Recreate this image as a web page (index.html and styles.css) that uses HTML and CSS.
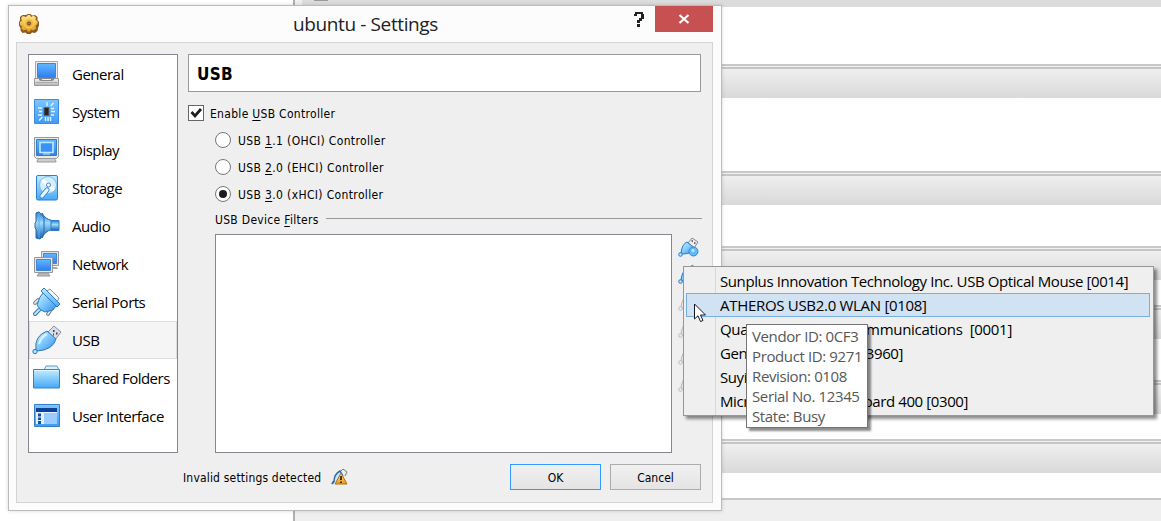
FILE: index.html
```
<!DOCTYPE html>
<html lang="en">
<head>
<meta charset="utf-8">
<title>ubuntu - Settings</title>
<link rel="stylesheet" href="styles.css">
</head>
<body>
<svg class="defs" width="0" height="0" aria-hidden="true">
  <defs>
    <linearGradient id="blue" x1="0" y1="0" x2="0" y2="1"><stop offset="0" stop-color="#62b8ff"/><stop offset="1" stop-color="#2f7df0"/></linearGradient>
    <linearGradient id="panel" x1="0" y1="0" x2="0" y2="1"><stop offset="0" stop-color="#7cc6ff"/><stop offset="1" stop-color="#3f9bf8"/></linearGradient>
    <linearGradient id="sky" x1="0" y1="0" x2="1" y2="1"><stop offset="0" stop-color="#d4f1ff"/><stop offset=".5" stop-color="#79c6fc"/><stop offset="1" stop-color="#3a8ae8"/></linearGradient>
    <linearGradient id="soft" x1="0" y1="0" x2="0" y2="1"><stop offset="0" stop-color="#c2edff"/><stop offset="1" stop-color="#45a8fa"/></linearGradient>
    <linearGradient id="metal" x1="0" y1="0" x2="0" y2="1"><stop offset="0" stop-color="#f4f4f4"/><stop offset="1" stop-color="#b5b5b5"/></linearGradient>
    <linearGradient id="cone" x1="0" y1="0" x2="0" y2="1"><stop offset="0" stop-color="#2f7acb"/><stop offset=".4" stop-color="#9bdcff"/><stop offset="1" stop-color="#175baf"/></linearGradient>
    <linearGradient id="gold" x1="0" y1="0" x2="0" y2="1"><stop offset="0" stop-color="#ffe88a"/><stop offset="1" stop-color="#e39a17"/></linearGradient>
    <symbol id="plug" viewBox="0 0 22 22">
      <path d="M10 7 14 2l6 4-4 6z" fill="#eee" stroke="#888"/>
      <path d="M13.500 5h1.500M16 7h1.500" stroke="#444" stroke-width="1.500"/>
      <path d="M3 17Q4 8 9 6l9 7Q13 18 4 18z" fill="url(#sky)" stroke="#2878c4"/>
      <circle cx="2.500" cy="18.500" r="1.800" fill="#b5e2ff" stroke="#2878c4"/>
    </symbol>
    <symbol id="plug-off" viewBox="0 0 22 22">
      <path d="M10 7 14 2l6 4-4 6z" fill="#eee" stroke="#bbb"/>
      <path d="M3 17Q4 8 9 6l9 7Q13 18 4 18z" fill="#e3e3e3" stroke="#bbb"/>
      <circle cx="2.500" cy="18.500" r="1.800" fill="#eee" stroke="#bbb"/>
    </symbol>
  </defs>
</svg>

<main class="desktop">
  <div class="manager">
    <div class="manager-list"></div>
    <div class="manager-details">
      <div class="band-tail"><i></i></div>
      <div class="gap g57"></div><div class="band"></div>
      <div class="gap g73"></div><div class="band"></div>
      <div class="gap g41"></div><div class="band"></div>
      <div class="gap g25"></div><div class="band"></div>
      <div class="gap g41"></div><div class="band"></div>
      <div class="gap g25"></div><div class="band"></div>
      <div class="gap g25"></div><div class="details-end"></div>
    </div>
  </div>

  <section class="dialog">
    <header class="titlebar">
      <svg class="gear" width="22" height="22" viewBox="0 0 22 22">
        <path d="M8 2 10 1h2.500L14 2.500l3-.500 2.500 2v3l1.500 2v3.500L20 15l-.5 3-2.500 2-3-.5-1.500 1.500H9L7.500 19.500l-3 .5-2-2.500V15L1 12.500V9.500L2 7V4l2.500-2z" fill="#8a5a22"/>
        <path d="M8.500 3.500 10 2h2l1 2 2.500-1.500 2.500 2-.5 2.500 2 1v3l-2 1.500.5 3-2.500 2-2.500-1-1 2H9.500l-1-2-3 1-2-2 .5-2.500-2-1V9l2-1.500-1-2.500L5 3l3 1z" fill="url(#gold)"/>
        <circle cx="11" cy="10.500" r="4.500" fill="#eeb440" stroke="#f6d269"/>
        <circle cx="11" cy="10.500" r="1.600" fill="#9a7a50" stroke="#6b4720"/>
      </svg>
      <h1 class="title"><span>ubuntu - Settings</span></h1>
      <svg class="help" width="12" height="17" viewBox="0 0 12 17"><path d="M1 5V3h1V1h8v2h1v5H9v2H7v2H4V9h2V7h2V3H4v2zM4 13h3v3H4z" fill="#222"/></svg>
      <button class="close" aria-label="Close"><svg width="12" height="10" viewBox="0 0 12 10"><path d="M1.500 1 10.500 9M10.500 1 1.500 9" stroke="#fff" stroke-width="2.200"/></svg></button>
    </header>

    <div class="client">
      <div class="columns">
        <nav class="nav">
          <a class="nav-item"><svg width="28" height="28" viewBox="0 0 28 28">
            <path d="M2.500 1.500h22v17h-22z" fill="#eee" stroke="#aaa"/><path d="M4.500 3.500h18v14h-18z" fill="url(#blue)" stroke="#3c86d3"/>
            <path d="M1.500 18.500h24v7h-24z" fill="url(#metal)" stroke="#999"/><path d="M6 18h15v2l-2 1H8l-2-1z" fill="#888"/><path d="M9 19h9v1H9z" fill="#eee"/><path d="M3 22.500h21" stroke="#aaa"/>
          </svg><span>General</span></a>
          <a class="nav-item"><svg width="28" height="28" viewBox="0 0 28 28">
            <path d="M1.500 1.500h24v24h-24z" fill="url(#panel)" stroke="#3f8cd8"/><path d="M11 9.500h5v8h-5z" fill="#252525" stroke="#666"/>
            <path d="M14 4v4M17.500 8l3-3M5 10h4M6 13.500h3M5 17h4M18 10.500h3M18 13.500h4M18 17h3M6 22.500 9.500 19M12.500 19v4M15 19v4M17.500 19v4" stroke="#ddf4ff" stroke-width="1.400"/>
          </svg><span>System</span></a>
          <a class="nav-item"><svg width="28" height="28" viewBox="0 0 28 28">
            <path d="M6 22h15l2 3v1H4v-1z" fill="#ccc" stroke="#999"/><path d="M1.500 1.500h24v19l-2 2h-20l-2-2z" fill="#eaeaea" stroke="#999"/><path d="M3.500 3.500h20v16h-20z" fill="url(#blue)" stroke="#347cc5"/><path d="M7 6.500h13v10H7z" fill="#3a90f5" stroke="#bcecff" stroke-width="1.600"/><path d="M10 18h7" stroke="#bcecff"/>
          </svg><span>Display</span></a>
          <a class="nav-item"><svg width="28" height="28" viewBox="0 0 28 28">
            <rect x="3.500" y="1.500" width="21" height="24.500" rx="1.500" fill="url(#soft)" stroke="#2f7fcf"/><circle cx="15" cy="11" r="8.500" fill="#d6effe" stroke="#7ebcec"/><path d="M15 11 9 6M15 11l6 5" stroke="#fff" stroke-width="3"/><circle cx="15.500" cy="11" r="2" fill="#fff" stroke="#3789d4"/><path d="m14 16-5 6" stroke="#3186d6" stroke-width="5" stroke-linecap="round"/><path d="m14 16-5 6" stroke="#edf9ff" stroke-width="3.200" stroke-linecap="round"/>
          </svg><span>Storage</span></a>
          <a class="nav-item"><svg width="28" height="28" viewBox="0 0 28 28">
            <path d="M9 1Q12 7 19 8.500v9Q12 19 9 26z" fill="url(#cone)" stroke="#2268b2"/><path d="M18 8.500h8v10h-8z" fill="url(#cone)" stroke="#2f7cca"/><path d="M2 11v5l1 1v9l4 1q3-2 4-6V6Q9 2 6 0L3 1v9z" fill="url(#cone)" stroke="#2268b2"/><path d="M6 1v25" stroke="#5fb0ee"/>
          </svg><span>Audio</span></a>
          <a class="nav-item"><svg width="28" height="28" viewBox="0 0 28 28">
            <path d="M8.500 1.500h17v14h-17z" fill="#e4e4e4" stroke="#999"/><path d="M10.500 3.500h13v10h-13z" fill="url(#blue)" stroke="#458ad0"/><path d="M17 17h7l1 2h-7z" fill="#aaa"/>
            <path d="M6 23h9l2 3H4z" fill="#bbb" stroke="#999"/><path d="M1.500 7.500h18v15h-18z" fill="#e8e8e8" stroke="#999"/><path d="M3.500 9.500h14v11h-14z" fill="url(#blue)" stroke="#458ad0"/>
          </svg><span>Network</span></a>
          <a class="nav-item"><svg width="28" height="28" viewBox="0 0 28 28">
            <path d="m14 3 3-2 9 9-2 4z" fill="#f2f2f2" stroke="#999"/><path d="m5 12-3 3M17 23l-2 3" stroke="#777" stroke-width="3.800" stroke-linecap="round"/><path d="m5 12-3 3M17 23l-2 3" stroke="#cfe9f8" stroke-width="1.800" stroke-linecap="round"/><path d="m6 22-4 4" stroke="#357cb8" stroke-width="4" stroke-linecap="round"/><path d="m6 22-4 4" stroke="#b9e7ff" stroke-width="2" stroke-linecap="round"/>
            <path d="m10 5 13 13-3 4-8 2q-5-1-8-7l3-8z" fill="url(#sky)" stroke="#2c7dc4"/><path d="m8 3 3-3 16 16-3 3z" fill="url(#soft)" stroke="#2c7dc4"/>
          </svg><span>Serial Ports</span></a>
          <a class="nav-item selected"><svg width="28" height="28" viewBox="0 0 28 28">
            <path d="m15 6 6-6 7 6-6 8z" fill="#d9dde5" stroke="#8693aa"/><path d="M20 5h1.500M23 7.500h1.500M20 8.500h1" stroke="#445" stroke-width="2"/>
            <path d="M3 24Q1 10 14 5l9 8Q20 24 4 25z" fill="url(#sky)" stroke="#3478b9"/><path d="M6 18Q8 11 14 8" stroke="#d8f4ff" stroke-width="2" fill="none"/><circle cx="2" cy="25.500" r="2.200" fill="#a9dffe" stroke="#3478b9"/>
          </svg><span>USB</span></a>
          <a class="nav-item"><svg width="28" height="28" viewBox="0 0 28 28">
            <path d="M11 6 13 2h11l2 4v4H11z" fill="#d7f3ff" stroke="#5d9dca"/><path d="M.5 5.500h26v18.500H.5z" fill="url(#soft)" stroke="#3b83bf"/><path d="M1.500 6.500h24" stroke="#e0f7ff"/>
          </svg><span>Shared Folders</span></a>
          <a class="nav-item"><svg width="28" height="28" viewBox="0 0 28 28">
            <path d="M1.500 2.500h25v22h-25z" fill="url(#panel)" stroke="#387fc6"/><path d="M3 6h21v4H3z" fill="#0b429b"/><path d="M3 10h21v12H3z" fill="#e2f1ff"/><path d="M11 11h13v11H11z" fill="#9bccff"/><path d="M5 11.500h3v3H5zM5 15.500h3v2.500H5zM5 19h3v3H5z" fill="#1550a8"/>
          </svg><span>User Interface</span></a>
        </nav>

        <div class="page">
          <h2 class="page-title"><span>USB</span></h2>
          <label class="option enable"><i class="check"><svg width="14" height="14" viewBox="0 0 14 14"><path d="m2.500 6 3.500 4 6-7" fill="none" stroke="#1d1d1d" stroke-width="2.700"/></svg></i><span>Enable <u>U</u>SB Controller</span></label>
          <label class="option radio-row"><i class="radio"></i><span>USB <u>1</u>.1 (OHCI) Controller</span></label>
          <label class="option radio-row"><i class="radio"></i><span>USB <u>2</u>.0 (EHCI) Controller</span></label>
          <label class="option radio-row"><i class="radio on"></i><span>USB <u>3</u>.0 (xHCI) Controller</span></label>
          <div class="filters-head"><span>USB Device <u>F</u>ilters</span><hr></div>
          <div class="filters">
            <div class="filter-list"></div>
            <div class="tools">
              <svg width="22" height="22"><use href="#plug"/><circle cx="15.500" cy="15.500" r="4.500" fill="#62b9fb" stroke="#3688cf"/><circle cx="15" cy="14.500" r="1.500" fill="#c5eaff"/></svg>
              <svg width="22" height="22"><use href="#plug"/></svg>
              <svg width="22" height="22"><use href="#plug-off"/></svg>
              <svg width="22" height="22"><use href="#plug-off"/></svg>
              <svg width="22" height="22"><use href="#plug-off"/></svg>
              <svg width="22" height="22"><use href="#plug-off"/></svg>
            </div>
          </div>
        </div>
      </div>

      <footer class="footer">
        <span class="status">Invalid settings detected</span>
        <svg class="warn" width="18" height="18" viewBox="0 0 18 18">
          <path d="m9 4 3-3 4 3-2 4" fill="#eee" stroke="#777"/><path d="M3 14Q3 6 9 3l3 5" fill="#c3e7ff" stroke="#2867ad" stroke-width="1.400"/><path d="m3 13-2 3" stroke="#2867ad" stroke-width="2"/>
          <path d="m10 5 6 11H4z" fill="url(#gold)" stroke="#bc6b12" stroke-linejoin="round"/><path d="M10 8v4M10 13.500V15" stroke="#1b1400" stroke-width="1.600"/>
        </svg>
        <button class="btn primary">OK</button>
        <button class="btn">Cancel</button>
      </footer>
    </div>
  </section>

  <div class="menu">
    <div class="menu-item"><span>Sunplus Innovation Technology Inc. USB Optical Mouse [0014]</span></div>
    <div class="menu-item active"><span>ATHEROS USB2.0 WLAN [0108]</span></div>
    <div class="menu-item split w-comm"><span>Qua</span><span>ommunications&nbsp; [0001]</span></div>
    <div class="menu-item split w-gen"><span>Gen</span><span>3960]</span></div>
    <div class="menu-item"><span>Suyi</span></div>
    <div class="menu-item split w-micr"><span>Micr</span><span>oard 400 [0300]</span></div>
  </div>

  <div class="tooltip">
    <div>Vendor ID: 0CF3</div>
    <div>Product ID: 9271</div>
    <div>Revision: 0108</div>
    <div>Serial No. 12345</div>
    <div>State: Busy</div>
  </div>

  <svg class="cursor" width="13" height="20" viewBox="0 0 13 20"><path d="M1.500 1v15l3.500-3.200L7.500 18.500l2.500-1L7.500 12h5z" fill="#fff" stroke="#111827"/></svg>
</main>
</body>
</html>
```

FILE: styles.css
```
* { box-sizing: border-box; }
body { margin: 0; overflow: hidden; font-family: "Open Sans", "Noto Sans", sans-serif; color: #000; }
.defs { position: absolute; }
svg { display: block; flex: none; overflow: visible; }
span { white-space: nowrap; }
u { text-decoration-thickness: 1px; text-underline-offset: 2px; }
.desktop { position: relative; width: 1161px; height: 521px; overflow: hidden; background: #efefef; }

/* Manager window behind the dialog */
.manager { display: flex; height: 521px; }
.manager-list { width: 293px; background: #fff; }
.manager-details { flex: 1; border-left: 2px solid #b0b0b0; background: #efefef; }
.band-tail { height: 7px; background: #dcdcdc; border-left: 7px solid #efefef; }
.band-tail i { display: block; width: 14px; height: 1px; margin-left: 12px; background: #999; }
.gap { background: #fff; }
.g57 { height: 57px; }
.g73 { height: 73px; }
.g41 { height: 41px; }
.g25 { height: 25px; }
.band { height: 34px; border-top: 2px solid #c8c8c8; background: linear-gradient(#f0f0f0 0 1px, #c5c5c5 1px 3px, #efefef 3px, #d9d9d9 100%); }
.details-end { height: 23px; border-top: 2px solid #c8c8c8; background: #efefef; }

/* Settings dialog */
.dialog { position: absolute; left: 8px; top: 5px; width: 714px; height: 506px; padding: 0 8px 8px 7px; border: 1px solid #bbb; background: #fcfcfc; box-shadow: 0 0 4px rgba(0, 0, 0, .16); }
.titlebar { display: flex; height: 36px; align-items: flex-start; }
.gear { margin: 7px 0 0 2px; }
.title { flex: 1; margin: 4px 0 0; padding-left: 58px; font-size: 19px; line-height: 28px; font-weight: 400; letter-spacing: -.38px; text-align: center; color: #222; }
.help { margin: 5px 10px 0 0; }
.close { display: grid; place-items: center; width: 58px; height: 26px; padding: 0; border: 0; background: #c75050; }
.client { height: 461px; padding: 11px 12px; border: 1px solid #d4d4d4; background: #efefef; }
.columns { display: flex; gap: 10px; height: 399px; margin-left: -1px; }
.nav { flex: none; width: 150px; border: 1px solid #828790; background: #fff; font-size: 15px; }
.nav-item { display: flex; align-items: center; gap: 11px; height: 38px; padding-left: 4px; line-height: 20px; }
.nav-item span { letter-spacing: -.5px; }
.nav-item.selected { background: #f5f5f5; box-shadow: inset 0 0 0 1px #dcdcdc; }
.page { flex: none; width: 514px; font-family: "DejaVu Sans Condensed", "DejaVu Sans", sans-serif; font-stretch: condensed; font-size: 12px; letter-spacing: .3px; }
.page-title { display: flex; align-items: center; height: 38px; width: 513px; margin: 0 0 13px; padding: 2px 0 0 8px; border: 1px solid #999; background: #fff; font-size: 17px; }
.option { display: flex; align-items: center; gap: 6px; height: 16px; line-height: 16px; }
.option span, .filters-head span { padding-top: 2px; }
.enable { margin-bottom: 11px; }
.radio-row { margin: 0 0 11px 27px; gap: 7px; letter-spacing: .36px; }
.check { width: 16px; height: 16px; border: 1px solid #666; background: #fff; }
.radio { display: grid; place-items: center; width: 16px; height: 16px; border: 1px solid #777; border-radius: 50%; background: #fff; }
.radio.on::after { content: ""; width: 8px; height: 8px; border-radius: 50%; background: #1d1d1d; }
.filters-head { display: flex; align-items: center; gap: 7px; height: 16px; margin: -2px 0 7px 27px; line-height: 16px; }
.filters-head hr { flex: 1; height: 1px; margin: 0 0 1px; border: 0; background: #999; }
.filters { display: flex; gap: 6px; margin-left: 27px; height: 219px; }
.filter-list { width: 457px; border: 1px solid #828790; background: #fff; }
.tools { display: flex; flex-direction: column; gap: 5px; padding-top: 2px; }
.footer { display: flex; align-items: center; height: 26px; margin: 11px -1px 0 154px; font-family: "DejaVu Sans Condensed", "DejaVu Sans", sans-serif; font-stretch: condensed; font-size: 12px; }
.status { width: 148px; padding-top: 2px; letter-spacing: .18px; }
.warn { margin-right: auto; }
.btn { width: 91px; height: 26px; margin-left: 9px; padding: 2px 0 0; border: 1px solid #acacac; background: linear-gradient(#f0f0f0, #e4e4e4); font: inherit; color: #000; }
.btn.primary { border-color: #3399ff; }

/* Device menu */
.menu { position: absolute; left: 683px; top: 266px; width: 471px; height: 150px; padding: 2px 3px; border: 1px solid #979797; background: linear-gradient(90deg, transparent 31px, #d8d8d8 31px 32px, transparent 32px) #efefef; box-shadow: 3px 3px 3px rgba(0, 0, 0, .45); font-size: 15px; letter-spacing: -.4px; }
.menu-item { display: flex; align-items: center; width: 464px; height: 24px; padding: 0 0 1px 33px; margin-left: -1px; border: 1px solid transparent; line-height: 20px; }
.menu-item.active { background: #d1e2f2; border-color: #78aee5; letter-spacing: -.3px; }
.split { justify-content: space-between; }
.w-comm { width: 327px; letter-spacing: -.3px; }
.w-gen { width: 218px; }
.w-micr { width: 283px; }

.tooltip { position: absolute; left: 746px; top: 324px; width: 122px; height: 104px; padding: 1px 5px; border: 1px solid #767676; background: #fff; box-shadow: 3px 3px 2px rgba(0, 0, 0, .45); color: #575757; font-size: 15px; line-height: 20px; letter-spacing: -.38px; white-space: nowrap; }
.cursor { position: absolute; left: 693px; top: 303px; }
```
